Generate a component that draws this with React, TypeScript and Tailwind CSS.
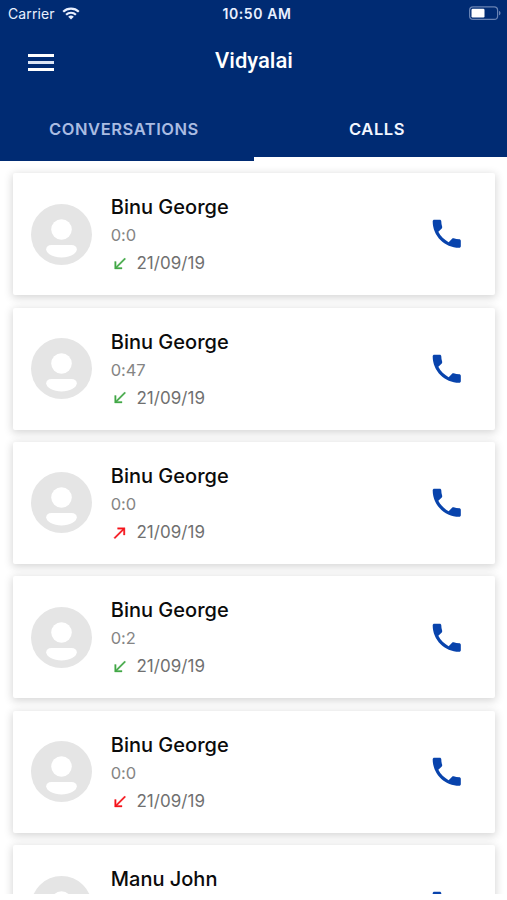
type Details = { duration: string; direction: "in" | "out"; color: string };
type Call = { name: string; details?: Details };

const calls: Call[] = [
  { name: "Binu George", details: { duration: "0:0", direction: "in", color: "text-[#43a847]" } },
  { name: "Binu George", details: { duration: "0:47", direction: "in", color: "text-[#43a847]" } },
  { name: "Binu George", details: { duration: "0:0", direction: "out", color: "text-[#f5141b]" } },
  { name: "Binu George", details: { duration: "0:2", direction: "in", color: "text-[#43a847]" } },
  { name: "Binu George", details: { duration: "0:0", direction: "in", color: "text-[#f5141b]" } },
  { name: "Manu John" },
];

const arrows = {
  in: "M20 5.41 18.59 4 7 15.59V9H5v10h10v-2H8.41z",
  out: "M9 5v2h6.59L4 18.59 5.41 20 17 8.41V15h2V5z",
};

function Avatar() {
  return (
    <svg className="size-[61px] shrink-0" viewBox="0 0 61 61">
      <circle cx="30.5" cy="30.5" r="30.5" fill="#e5e5e5" />
      <circle cx="30.5" cy="25.500" r="10.3" fill="#fff" />
      <path d="M20.500 41h20c3.300 0 5.300 1.700 5.300 4.300 0 4.400-7.300 8.200-15.300 8.200s-15.300-3.800-15.300-8.200C15.200 42.700 17.200 41 20.500 41z" fill="#fff" />
    </svg>
  );
}

function CallCard({ name, details }: Call) {
  return (
    <li className="flex h-[122px] shrink-0 items-center rounded-[2px] bg-white pr-[29.500px] pl-[18.600px] shadow-[0_2px_8px_1px_rgba(0,0,0,0.16)]">
      <Avatar />
      <div className="ml-[18.400px] flex h-[82px] grow flex-col">
        <span className="text-[20px] leading-[28px] font-medium text-[#0b0b0b]">{name}</span>
        {details && (
          <>
            <span className="mt-[1px] text-[16.500px] leading-[27px] tracking-[-0.1px] text-[#858585]">{details.duration}</span>
            <span className="mt-[0.700px] flex h-[28px] shrink-0 items-center gap-[8px] text-[17px] tracking-[0.050px] text-[#707070]">
              <svg className={`size-[17.600px] ${details.color}`} viewBox="0 0 24 24" fill="currentColor" stroke="currentColor" strokeWidth=".5">
                <path d={arrows[details.direction]} />
              </svg>
              21/09/19
            </span>
          </>
        )}
      </div>
      <svg className="size-[37.500px] text-[#0843ac]" viewBox="0 0 24 24" fill="currentColor">
        <path d="M6.620 10.790c1.440 2.830 3.760 5.140 6.590 6.590l2.200-2.200c.27-.27.67-.36 1.020-.24 1.120.37 2.330.57 3.570.57.55 0 1 .45 1 1V20c0 .55-.45 1-1 1-9.390 0-17-7.610-17-17 0-.55.45-1 1-1h3.500c.55 0 1 .45 1 1 0 1.250.2 2.450.57 3.570.11.35.03.74-.25 1.020z" />
      </svg>
    </li>
  );
}

function StatusBar() {
  return (
    <div className="grid h-[28px] grid-cols-3 items-center px-[8px] pb-[2px] text-[14px] text-[#e9f0ff]">
      <div className="flex items-center gap-[7px]">
        <span className="tracking-[0.1px]">Carrier</span>
        <svg className="h-[13px] w-[18px]" viewBox="0 0 18 13" fill="none" stroke="currentColor" strokeWidth="2.200">
          <path d="M1.200 4.800a11.200 11.200 0 0 1 15.600 0M4.100 7.700a7.100 7.100 0 0 1 9.800 0" />
          <path d="M9 12.600 6.200 9.800a4 4 0 0 1 5.600 0z" fill="currentColor" stroke="none" />
        </svg>
      </div>
      <span className="pl-[7px] text-center font-semibold tracking-[0.600px] whitespace-nowrap">10:50 AM</span>
      <svg className="-mr-[1.500px] h-[14px] w-[32px] justify-self-end" viewBox="0 0 32 14">
        <rect x=".6" y=".8" width="28" height="12.600" rx="3.500" fill="none" stroke="#6883b4" strokeWidth="1.200" />
        <rect x="2.500" y="2.700" width="13" height="8.800" rx="1.200" fill="#fff" />
        <path d="M30 5c2 .5 2 3.700 0 4.200z" fill="#6883b4" />
      </svg>
    </div>
  );
}

export default function App() {
  return (
    <div className="flex h-[900px] w-[507px] flex-col bg-white pb-[6px] font-['Inter','Liberation_Sans',sans-serif]">
      <header className="flex h-[161px] shrink-0 flex-col bg-[#002b73]">
        <StatusBar />
        <div className="grid h-[68px] grid-cols-3 items-center px-[28px]">
          <div className="flex w-[26px] flex-col gap-[4px]">
            <i className="h-[3px] bg-white" />
            <i className="h-[3px] bg-[#dce5f5]" />
            <i className="h-[3px] bg-white" />
          </div>
          <h1 className="pb-[3px] pl-[1px] text-center font-['Roboto',sans-serif] text-[22px] leading-[28px] font-medium text-white">Vidyalai</h1>
        </div>
        <nav className="grid h-[65px] grid-cols-[254px_253px] text-[16.500px] font-semibold tracking-[0.550px]">
          <span className="flex h-[65px] items-center justify-center pt-[2px] pr-[6px] text-[#aabce2]">CONVERSATIONS</span>
          <span className="flex h-[65px] items-center justify-center border-b-4 border-white pt-[6px] pr-[7px] text-[#f2f6ff]">CALLS</span>
        </nav>
      </header>
      <ul className="flex min-h-0 grow flex-col gap-[12.400px] overflow-hidden pt-[12.200px] pr-[12px] pl-[12.800px]">
        {calls.map((call, i) => (
          <CallCard key={i} {...call} />
        ))}
      </ul>
    </div>
  );
}
